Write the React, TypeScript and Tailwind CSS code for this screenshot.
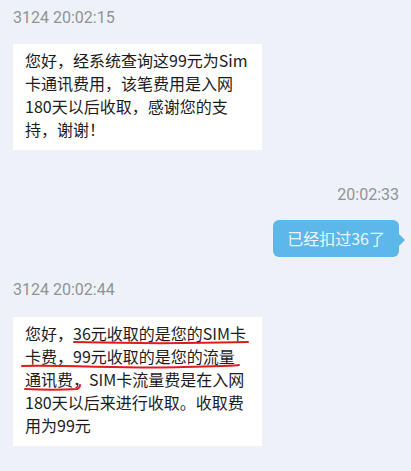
import React from 'react';

const cjk = { fontFamily: '"Noto Sans CJK SC", "Noto Sans", sans-serif' };
const stamp = { fontFamily: 'Roboto, "Noto Sans", sans-serif' };

const Stamp: React.FC<{ text: string; right?: boolean }> = ({ text, right }) => (
  <div
    className={`text-[16px] leading-[18px] text-[#8f9296] ${right ? 'self-end' : ''}`}
    style={stamp}
  >
    {text}
  </div>
);

const Bubble: React.FC<{ children: React.ReactNode }> = ({ children }) => (
  <div
    className="relative w-[249px] bg-white px-[12px] pt-[5px] pb-[9px] text-[16px] leading-[23px] text-[#1c1c1c]"
    style={cjk}
  >
    {children}
  </div>
);

export default function App() {
  return (
    <div className="w-[411px] h-[471px] overflow-hidden bg-[#eef2f8] pl-[13px] pr-[12px] pt-[9px] flex flex-col">
      <Stamp text="3124 20:02:15" />
      <div className="mt-[17px]">
        <Bubble>
          您好，经系统查询这99元为Sim卡通讯费用，该笔费用是入网180天以后收取，感谢您的支持，谢谢！
        </Bubble>
      </div>

      <div className="mt-[36px] flex flex-col items-end">
        <Stamp text="20:02:33" right />
        <div className="relative mt-[16px]">
          <div
            className="rounded-[6px] bg-[#5db8ea] px-[14px] py-[6px] text-[16px] leading-[25px] text-[#eaf6fd]"
            style={cjk}
          >
            已经扣过36了
          </div>
          <div className="absolute right-[-6px] top-[14px] h-0 w-0 border-y-[6px] border-l-[6px] border-y-transparent border-l-[#5db8ea]" />
        </div>
      </div>

      <div className="mt-[24px]">
        <Stamp text="3124 20:02:44" />
      </div>
      <div className="mt-[18px]">
        <Bubble>
          您好，36元收取的是您的SIM卡卡费，99元收取的是您的流量通讯费，SIM卡流量费是在入网180天以后来进行收取。收取费用为99元
          <svg className="absolute left-0 top-0 pointer-events-none" width="249" height="127" viewBox="0 0 249 127" fill="none">
            <path d="M61 25 C100 26 160 27 235 25" stroke="#e41b1b" strokeWidth="2" strokeLinecap="round" />
            <path d="M9 49 C60 48 120 52 170 50 C200 49 220 49 226 48" stroke="#e41b1b" strokeWidth="2" strokeLinecap="round" />
            <path d="M12 72 C30 73 50 73 64 72 C66 71 67 70 67 68" stroke="#e41b1b" strokeWidth="2" strokeLinecap="round" />
          </svg>
        </Bubble>
      </div>
    </div>
  );
}
